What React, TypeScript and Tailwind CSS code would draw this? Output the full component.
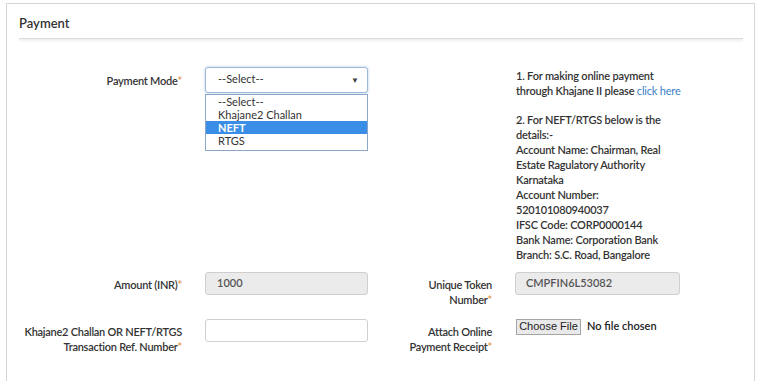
import React from 'react';

const font = { fontFamily: 'Lato, "Open Sans", sans-serif' };

function Star() {
  return <span className="text-[#e8a05c] font-bold">*</span>;
}

function Label({ children }: { children: React.ReactNode }) {
  return (
    <div className="whitespace-nowrap text-right text-[11px] leading-[15px] font-semibold tracking-[-0.25px] text-[#333]">
      {children}
    </div>
  );
}

export default function App() {
  return (
    <div className="w-[763px] h-[381px] bg-white overflow-hidden" style={font}>
      <div className="ml-[6px] mt-[3px] w-[749px] h-[400px] border border-[#d6d6d6] bg-white px-[12px]">
        <div className="pt-[10px] pb-[4px] text-[13px] font-semibold text-[#333]">Payment</div>
        <div className="h-[5px] w-[724px] border-t border-[#dcdcdc] bg-gradient-to-b from-[#efefef] to-white" />

        <div className="mt-[24px] flex">
          <div className="w-[163px] pt-[6px]">
            <Label>
              Payment Mode<Star />
            </Label>
          </div>
          <div className="relative ml-[23px] w-[163px]">
            <div className="flex h-[26px] items-center justify-between rounded-[3px] border border-[#9fb9d6] bg-white pl-[12px] pr-[8px] text-[11px] text-[#333] shadow-[0_0_3px_rgba(80,140,200,0.45)]">
              <span>--Select--</span>
              <span className="text-[8px] text-[#444]">▼</span>
            </div>
            <div className="absolute left-0 top-[27px] w-[163px] border border-[#8aa7c8] bg-white pb-[3px] text-[11px] leading-[13px] text-[#333]">
              <div className="pl-[12px]">--Select--</div>
              <div className="pl-[12px]">Khajane2 Challan</div>
              <div className="bg-[#3a8ee6] pl-[12px] font-bold text-white">NEFT</div>
              <div className="pl-[12px]">RTGS</div>
            </div>
          </div>
          <div className="ml-[148px] w-[180px] pt-[1px] text-[11px] leading-[15px] font-semibold tracking-[-0.2px] text-[#333]">
            <div>1. For making online payment</div>
            <div>
              through Khajane II please <span className="font-normal text-[#3b7fc4]">click here</span>
            </div>
            <div className="mt-[14px]">2. For NEFT/RTGS below is the</div>
            <div>details:-</div>
            <div>Account Name: Chairman, Real</div>
            <div>Estate Ragulatory Authority</div>
            <div>Karnataka</div>
            <div>Account Number:</div>
            <div>520101080940037</div>
            <div>IFSC Code: CORP0000144</div>
            <div>Bank Name: Corporation Bank</div>
            <div>Branch: S.C. Road, Bangalore</div>
          </div>
        </div>

        <div className="mt-[10px] flex">
          <div className="w-[163px] pt-[5px]">
            <Label>
              Amount (INR)<Star />
            </Label>
          </div>
          <div className="ml-[23px] flex h-[23px] w-[163px] items-center rounded-[3px] border border-[#cfcfcf] bg-[#ebebeb] pl-[11px] text-[11px] font-semibold text-[#555]">
            1000
          </div>
          <div className="ml-[12px] w-[112px] pt-[5px]">
            <Label>
              Unique Token
              <br />
              Number<Star />
            </Label>
          </div>
          <div className="ml-[23px] flex h-[23px] w-[165px] items-center rounded-[3px] border border-[#cfcfcf] bg-[#ebebeb] pl-[10px] text-[11px] font-semibold text-[#555]">
            CMPFIN6L53082
          </div>
        </div>

        <div className="mt-[12px] flex">
          <div className="w-[163px] pt-[5px]">
            <Label>
              Khajane2 Challan OR NEFT/RTGS
              <br />
              Transaction Ref. Number<Star />
            </Label>
          </div>
          <div className="ml-[23px] h-[23px] w-[163px] rounded-[3px] border border-[#cfcfcf] bg-white" />
          <div className="ml-[12px] w-[112px] pt-[5px]">
            <Label>
              Attach Online
              <br />
              Payment Receipt<Star />
            </Label>
          </div>
          <div className="ml-[24px] flex h-[16px] items-center whitespace-nowrap">
            <div
              className="flex h-[16px] w-[65px] items-center justify-center border border-[#a5a5a5] bg-[#e9e9e9] text-[11px] text-[#222]"
              style={{ fontFamily: '"Liberation Sans", Arial, sans-serif' }}
            >
              Choose File
            </div>
            <span className="ml-[6px] text-[11px] font-semibold text-[#222]">No file chosen</span>
          </div>
        </div>
      </div>
    </div>
  );
}
